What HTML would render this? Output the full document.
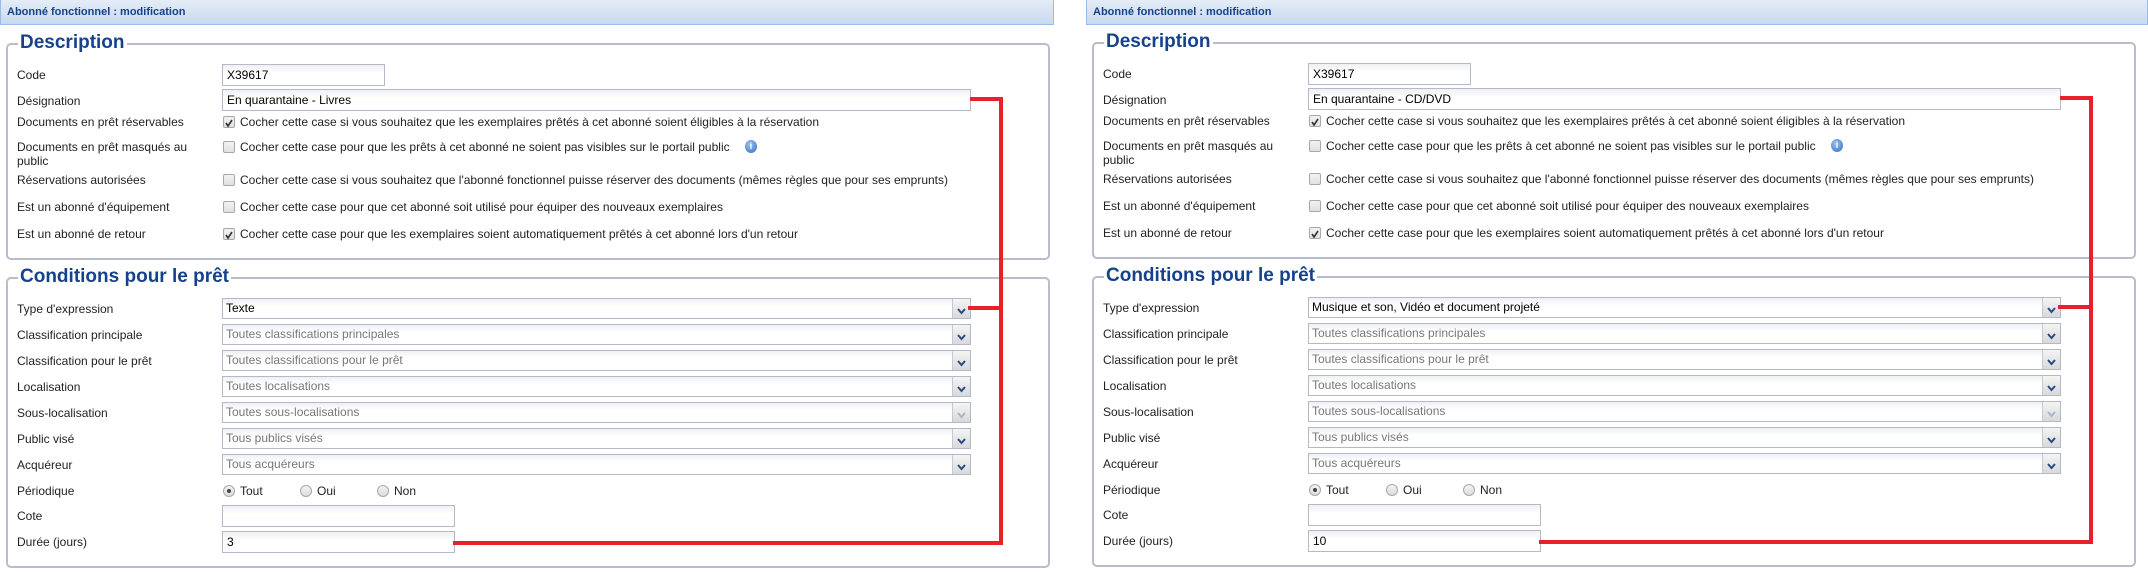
<!DOCTYPE html>
<html><head><meta charset="utf-8"><style>
*{box-sizing:border-box;margin:0;padding:0}
body{width:2148px;height:572px;background:#fff;position:relative;overflow:hidden;font-family:"Liberation Sans",sans-serif;font-size:12px;color:#222}
.p{position:absolute;top:0;width:1062px;height:572px}
.bar{position:absolute;left:0;top:0;right:0;height:25px;background:linear-gradient(#e4ecf7,#c9d9ef);border:1px solid #99bbe8;border-top:none}
.bar span{position:absolute;left:6px;top:6px;font-size:11px;font-weight:bold;color:#15428b}
.fs{position:absolute;left:6px;width:1044px;border:2px solid #b8bccb;border-radius:5px}
.lg{position:absolute;left:10px;top:-14px;background:#fff;padding:0 2px;font-size:19px;font-weight:bold;color:#15428b;line-height:24px}
.l{position:absolute;left:17px;line-height:14px}
.in{position:absolute;left:222px;height:22px;border:1px solid #b5b8c8;background:linear-gradient(#eef0f3,#fff 40%);padding-left:4px;line-height:20px;color:#000}
.sel{position:absolute;left:222px;width:749px;height:21px;border:1px solid #b5b8c8;background:linear-gradient(#eef0f3,#fff 40%);padding-left:3px;line-height:19px;color:#777}
.sel:after{content:"";position:absolute;right:0;top:0;width:17px;height:19px;border-left:1px solid #c6c9d2;background:linear-gradient(#f4f4f4,#d8d9dc)}
.sel i{position:absolute;right:4px;top:4px;z-index:2;width:9px;height:9px}
.cb{position:absolute;left:223px;width:12px;height:12px;border:1px solid #a8a8a8;border-radius:2px;background:linear-gradient(#f2f2f2,#e0e0e0)}
.ct{position:absolute;left:240px;line-height:14px}
.rd{position:absolute;width:12px;height:12px;border:1px solid #a8a8a8;border-radius:50%;background:linear-gradient(#f2f2f2,#ddd)}
.red{position:absolute;background:#e8202a}
.info{position:absolute;width:12px;height:13px;border-radius:50%;background:radial-gradient(circle at 40% 35%,#9cc3ef,#2f6bc4);color:#fff;font-size:9px;font-weight:bold;text-align:center;line-height:13px}
</style></head><body>

<!-- LEFT -->
<div class="p" style="left:0;width:1054px">
<div class="bar"><span>Abonné fonctionnel : modification</span></div>
<div class="fs" style="top:43px;height:217px"><div class="lg">Description</div></div>
<div class="l" style="top:68px">Code</div><div class="in" style="top:64px;width:163px">X39617</div>
<div class="l" style="top:94px">Désignation</div><div class="in" style="top:89px;width:749px">En quarantaine - Livres</div>
<div class="l" style="top:115px">Documents en prêt réservables</div><div class="cb" style="top:116px"><svg width="10" height="10" viewBox="0 0 10 10"><path d="M2 5l2 3 4-6" stroke="#333" stroke-width="1.6" fill="none"/></svg></div><div class="ct" style="top:115px">Cocher cette case si vous souhaitez que les exemplaires prêtés à cet abonné soient éligibles à la réservation</div>
<div class="l" style="top:140px">Documents en prêt masqués au<br>public</div><div class="cb" style="top:141px"></div><div class="ct" style="top:140px">Cocher cette case pour que les prêts à cet abonné ne soient pas visibles sur le portail public</div><div class="info" style="left:745px;top:140px">i</div>
<div class="l" style="top:173px">Réservations autorisées</div><div class="cb" style="top:174px"></div><div class="ct" style="top:173px">Cocher cette case si vous souhaitez que l'abonné fonctionnel puisse réserver des documents (mêmes règles que pour ses emprunts)</div>
<div class="l" style="top:200px">Est un abonné d'équipement</div><div class="cb" style="top:201px"></div><div class="ct" style="top:200px">Cocher cette case pour que cet abonné soit utilisé pour équiper des nouveaux exemplaires</div>
<div class="l" style="top:227px">Est un abonné de retour</div><div class="cb" style="top:228px"><svg width="10" height="10" viewBox="0 0 10 10"><path d="M2 5l2 3 4-6" stroke="#333" stroke-width="1.6" fill="none"/></svg></div><div class="ct" style="top:227px">Cocher cette case pour que les exemplaires soient automatiquement prêtés à cet abonné lors d'un retour</div>

<div class="fs" style="top:277px;height:291px"><div class="lg">Conditions pour le prêt</div></div>
<div class="l" style="top:302px">Type d'expression</div><div class="sel" style="top:298px;color:#000">Texte<i><svg width="9" height="9"><path d="M1 2l3.5 4 3.5-4" stroke="#2a4a80" stroke-width="2" fill="none"/></svg></i></div>
<div class="l" style="top:328px">Classification principale</div><div class="sel" style="top:324px">Toutes classifications principales<i><svg width="9" height="9"><path d="M1 2l3.5 4 3.5-4" stroke="#2a4a80" stroke-width="2" fill="none"/></svg></i></div>
<div class="l" style="top:354px">Classification pour le prêt</div><div class="sel" style="top:350px">Toutes classifications pour le prêt<i><svg width="9" height="9"><path d="M1 2l3.5 4 3.5-4" stroke="#2a4a80" stroke-width="2" fill="none"/></svg></i></div>
<div class="l" style="top:380px">Localisation</div><div class="sel" style="top:376px">Toutes localisations<i><svg width="9" height="9"><path d="M1 2l3.5 4 3.5-4" stroke="#2a4a80" stroke-width="2" fill="none"/></svg></i></div>
<div class="l" style="top:406px">Sous-localisation</div><div class="sel" style="top:402px">Toutes sous-localisations<i><svg width="9" height="9"><path d="M1 2l3.5 4 3.5-4" stroke="#a8b4c8" stroke-width="2" fill="none"/></svg></i></div>
<div class="l" style="top:432px">Public visé</div><div class="sel" style="top:428px">Tous publics visés<i><svg width="9" height="9"><path d="M1 2l3.5 4 3.5-4" stroke="#2a4a80" stroke-width="2" fill="none"/></svg></i></div>
<div class="l" style="top:458px">Acquéreur</div><div class="sel" style="top:454px">Tous acquéreurs<i><svg width="9" height="9"><path d="M1 2l3.5 4 3.5-4" stroke="#2a4a80" stroke-width="2" fill="none"/></svg></i></div>
<div class="l" style="top:484px">Périodique</div>
<div class="rd" style="left:223px;top:485px"><div style="width:4px;height:4px;border-radius:50%;background:#444;margin:3px"></div></div><div class="ct" style="left:240px;top:484px">Tout</div>
<div class="rd" style="left:300px;top:485px"></div><div class="ct" style="left:317px;top:484px">Oui</div>
<div class="rd" style="left:377px;top:485px"></div><div class="ct" style="left:394px;top:484px">Non</div>
<div class="l" style="top:509px">Cote</div><div class="in" style="top:505px;width:233px"></div>
<div class="l" style="top:535px">Durée (jours)</div><div class="in" style="top:531px;width:233px">3</div>
<div class="red" style="left:970px;top:97px;width:33px;height:4px"></div>
<div class="red" style="left:999px;top:97px;width:4px;height:448px"></div>
<div class="red" style="left:968px;top:306px;width:35px;height:4px"></div>
<div class="red" style="left:453px;top:541px;width:550px;height:4px"></div>
</div>

<!-- RIGHT -->
<div class="p" style="left:1086px">
<div class="bar"><span>Abonné fonctionnel : modification</span></div>
<div class="fs" style="top:42px;height:217px"><div class="lg">Description</div></div>
<div class="l" style="top:67px">Code</div><div class="in" style="top:63px;width:163px">X39617</div>
<div class="l" style="top:93px">Désignation</div><div class="in" style="top:88px;width:753px">En quarantaine - CD/DVD</div>
<div class="l" style="top:114px">Documents en prêt réservables</div><div class="cb" style="top:115px"><svg width="10" height="10" viewBox="0 0 10 10"><path d="M2 5l2 3 4-6" stroke="#333" stroke-width="1.6" fill="none"/></svg></div><div class="ct" style="top:114px">Cocher cette case si vous souhaitez que les exemplaires prêtés à cet abonné soient éligibles à la réservation</div>
<div class="l" style="top:139px">Documents en prêt masqués au<br>public</div><div class="cb" style="top:140px"></div><div class="ct" style="top:139px">Cocher cette case pour que les prêts à cet abonné ne soient pas visibles sur le portail public</div><div class="info" style="left:745px;top:139px">i</div>
<div class="l" style="top:172px">Réservations autorisées</div><div class="cb" style="top:173px"></div><div class="ct" style="top:172px">Cocher cette case si vous souhaitez que l'abonné fonctionnel puisse réserver des documents (mêmes règles que pour ses emprunts)</div>
<div class="l" style="top:199px">Est un abonné d'équipement</div><div class="cb" style="top:200px"></div><div class="ct" style="top:199px">Cocher cette case pour que cet abonné soit utilisé pour équiper des nouveaux exemplaires</div>
<div class="l" style="top:226px">Est un abonné de retour</div><div class="cb" style="top:227px"><svg width="10" height="10" viewBox="0 0 10 10"><path d="M2 5l2 3 4-6" stroke="#333" stroke-width="1.6" fill="none"/></svg></div><div class="ct" style="top:226px">Cocher cette case pour que les exemplaires soient automatiquement prêtés à cet abonné lors d'un retour</div>

<div class="fs" style="top:276px;height:291px"><div class="lg">Conditions pour le prêt</div></div>
<div class="l" style="top:301px">Type d'expression</div><div class="sel" style="top:297px;color:#000;width:753px">Musique et son, Vidéo et document projeté<i><svg width="9" height="9"><path d="M1 2l3.5 4 3.5-4" stroke="#2a4a80" stroke-width="2" fill="none"/></svg></i></div>
<div class="l" style="top:327px">Classification principale</div><div class="sel" style="top:323px;width:753px">Toutes classifications principales<i><svg width="9" height="9"><path d="M1 2l3.5 4 3.5-4" stroke="#2a4a80" stroke-width="2" fill="none"/></svg></i></div>
<div class="l" style="top:353px">Classification pour le prêt</div><div class="sel" style="top:349px;width:753px">Toutes classifications pour le prêt<i><svg width="9" height="9"><path d="M1 2l3.5 4 3.5-4" stroke="#2a4a80" stroke-width="2" fill="none"/></svg></i></div>
<div class="l" style="top:379px">Localisation</div><div class="sel" style="top:375px;width:753px">Toutes localisations<i><svg width="9" height="9"><path d="M1 2l3.5 4 3.5-4" stroke="#2a4a80" stroke-width="2" fill="none"/></svg></i></div>
<div class="l" style="top:405px">Sous-localisation</div><div class="sel" style="top:401px;width:753px">Toutes sous-localisations<i><svg width="9" height="9"><path d="M1 2l3.5 4 3.5-4" stroke="#a8b4c8" stroke-width="2" fill="none"/></svg></i></div>
<div class="l" style="top:431px">Public visé</div><div class="sel" style="top:427px;width:753px">Tous publics visés<i><svg width="9" height="9"><path d="M1 2l3.5 4 3.5-4" stroke="#2a4a80" stroke-width="2" fill="none"/></svg></i></div>
<div class="l" style="top:457px">Acquéreur</div><div class="sel" style="top:453px;width:753px">Tous acquéreurs<i><svg width="9" height="9"><path d="M1 2l3.5 4 3.5-4" stroke="#2a4a80" stroke-width="2" fill="none"/></svg></i></div>
<div class="l" style="top:483px">Périodique</div>
<div class="rd" style="left:223px;top:484px"><div style="width:4px;height:4px;border-radius:50%;background:#444;margin:3px"></div></div><div class="ct" style="left:240px;top:483px">Tout</div>
<div class="rd" style="left:300px;top:484px"></div><div class="ct" style="left:317px;top:483px">Oui</div>
<div class="rd" style="left:377px;top:484px"></div><div class="ct" style="left:394px;top:483px">Non</div>
<div class="l" style="top:508px">Cote</div><div class="in" style="top:504px;width:233px"></div>
<div class="l" style="top:534px">Durée (jours)</div><div class="in" style="top:530px;width:233px">10</div>
<div class="red" style="left:974px;top:96px;width:33px;height:4px"></div>
<div class="red" style="left:1003px;top:96px;width:4px;height:448px"></div>
<div class="red" style="left:972px;top:305px;width:35px;height:4px"></div>
<div class="red" style="left:453px;top:540px;width:554px;height:4px"></div>
</div>
</body></html>
